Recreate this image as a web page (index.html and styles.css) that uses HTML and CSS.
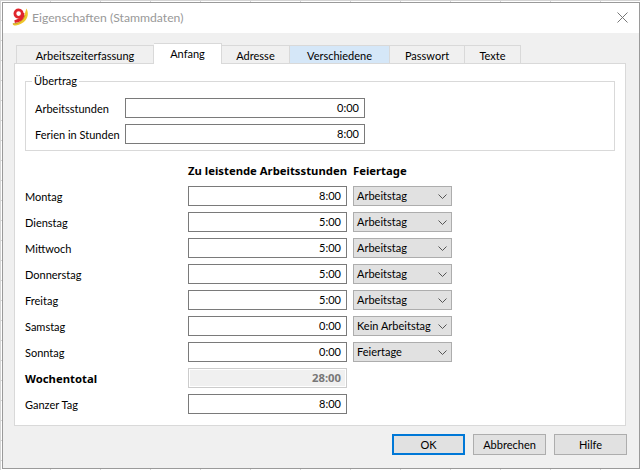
FILE: index.html
```html
<!DOCTYPE html>
<html lang="de">
<head>
<meta charset="utf-8">
<title>Eigenschaften (Stammdaten)</title>
<link rel="stylesheet" href="styles.css">
</head>
<body>
<div class="window">
  <header class="titlebar">
    <svg class="logo" width="17" height="18" viewBox="0 0 17 18">
      <path d="M14.5 0.5 C17.5 6 16 15 4 17.5 C2 17.8 0.8 17 0.5 15.5 C6 15.5 11 13 12.5 7 C13 5 13.5 3 14.5 0.5 Z" fill="#efc62c"/>
      <path d="M1 15.8 C6 16 11.5 13 13 7" fill="none" stroke="#b89a20" stroke-width="0.8"/>
      <circle cx="6.6" cy="5.6" r="3.7" fill="#fff" stroke="#e0252b" stroke-width="2.8"/>
      <path d="M11 5 C11.4 9.5 8 12.6 2.6 13.6" fill="none" stroke="#e0252b" stroke-width="2.8"/>
    </svg>
    <span class="title">Eigenschaften (Stammdaten)</span>
    <svg class="close" width="11" height="11" viewBox="0 0 11 11"><path d="M0.5 0.5 L10.5 10.5 M10.5 0.5 L0.5 10.5" stroke="#777" stroke-width="1" fill="none"/></svg>
  </header>
  <main class="content">
    <nav class="tabs">
      <span class="tab t1">Arbeitszeiterfassung</span>
      <span class="tab t2 active">Anfang</span>
      <span class="tab t3">Adresse</span>
      <span class="tab t4 tinted">Verschiedene</span>
      <span class="tab t5">Passwort</span>
      <span class="tab t6">Texte</span>
    </nav>
    <section class="panel">
      <fieldset class="group">
        <legend>Übertrag</legend>
        <div class="group-row"><label class="group-label">Arbeitsstunden</label><div class="field wide">0:00</div></div>
        <div class="group-row"><label class="group-label">Ferien in Stunden</label><div class="field wide">8:00</div></div>
      </fieldset>
      <div class="hours">
        <span></span><b class="head">Zu leistende Arbeitsstunden</b><b class="head">Feiertage</b>
        <label>Montag</label><div class="field">8:00</div><div class="select">Arbeitstag<svg class="chev" width="9" height="5" viewBox="0 0 9 5"><path d="M0.5 0.5 L4.5 4.5 L8.5 0.5" fill="none" stroke="#555"/></svg></div>
        <label>Dienstag</label><div class="field">5:00</div><div class="select">Arbeitstag<svg class="chev" width="9" height="5" viewBox="0 0 9 5"><path d="M0.5 0.5 L4.5 4.5 L8.5 0.5" fill="none" stroke="#555"/></svg></div>
        <label>Mittwoch</label><div class="field">5:00</div><div class="select">Arbeitstag<svg class="chev" width="9" height="5" viewBox="0 0 9 5"><path d="M0.5 0.5 L4.5 4.5 L8.5 0.5" fill="none" stroke="#555"/></svg></div>
        <label>Donnerstag</label><div class="field">5:00</div><div class="select">Arbeitstag<svg class="chev" width="9" height="5" viewBox="0 0 9 5"><path d="M0.5 0.5 L4.5 4.5 L8.5 0.5" fill="none" stroke="#555"/></svg></div>
        <label>Freitag</label><div class="field">5:00</div><div class="select">Arbeitstag<svg class="chev" width="9" height="5" viewBox="0 0 9 5"><path d="M0.5 0.5 L4.5 4.5 L8.5 0.5" fill="none" stroke="#555"/></svg></div>
        <label>Samstag</label><div class="field">0:00</div><div class="select">Kein Arbeitstag<svg class="chev" width="9" height="5" viewBox="0 0 9 5"><path d="M0.5 0.5 L4.5 4.5 L8.5 0.5" fill="none" stroke="#555"/></svg></div>
        <label>Sonntag</label><div class="field">0:00</div><div class="select">Feiertage<svg class="chev" width="9" height="5" viewBox="0 0 9 5"><path d="M0.5 0.5 L4.5 4.5 L8.5 0.5" fill="none" stroke="#555"/></svg></div>
        <label class="strong">Wochentotal</label><div class="field total">28:00</div><span></span>
        <label>Ganzer Tag</label><div class="field">8:00</div><span></span>
      </div>
    </section>
    <footer class="actions">
      <button class="btn default">OK</button>
      <button class="btn">Abbrechen</button>
      <button class="btn">Hilfe</button>
    </footer>
  </main>
</div>
</body>
</html>
```
FILE: styles.css
```css
* { box-sizing: border-box; }
html, body { margin: 0; height: 470px; overflow: hidden; }
body {
  padding: 2px 0 0 2px;
  background-color: #fff;
  background-image: linear-gradient(#d4d4d4 1px, transparent 1px), linear-gradient(90deg, #d4d4d4 1px, transparent 1px);
  background-size: 50px 20px;
  font: 11px Lato, "Open Sans", sans-serif;
  color: #000;
}
.window {
  width: 638px;
  height: 467px;
  border: 1px solid #9a9a9a;
  background: #f0f0f0;
  display: flex;
  flex-direction: column;
}
.titlebar {
  height: 30px;
  background: #fff;
  display: flex;
  align-items: center;
  padding: 0 11px 2px 9px;
}
.logo { margin-right: 3px; }
.title { flex: 1; color: #999; font-size: 12.2px; }
.content { flex: 1; padding: 11px 0 0 11px; }
.tabs { display: flex; height: 20px; padding-left: 2px; align-items: flex-end; position: relative; z-index: 1; }
.tab {
  height: 18px;
  margin-bottom: 1px;
  background: #f0f0f0;
  border: 1px solid #d9d9d9;
  border-bottom: 0;
  border-left: 0;
  display: flex;
  align-items: center;
  justify-content: center;
  padding-top: 1px;
}
.t1 { width: 138px; border-left: 1px solid #d9d9d9; }
.t2 { width: 68px; }
.t3 { width: 68px; }
.t4 { width: 100px; }
.t5 { width: 75px; }
.t6 { width: 56px; }
.tab.active { height: 21px; margin-bottom: 0; background: #fff; padding: 0 0 2px; }
.tab.tinted { background: #d5e7f8; }
.panel {
  width: 612px;
  height: 363px;
  margin-top: -1px;
  background: #fff;
  border: 1px solid #d9d9d9;
  padding: 10px 10px 0 10px;
}
.group {
  margin: 0;
  padding: 10px 0 0 9px;
  height: 77px;
  border: 1px solid #d9d9d9;
  display: flex;
  flex-direction: column;
  gap: 6px;
}
.group legend { padding: 0 2px; margin-left: -3px; line-height: 14px; }
.group-row { display: flex; align-items: center; height: 20px; }
.group-label { width: 90px; white-space: nowrap; }
.field {
  height: 20px;
  width: 100%;
  border: 1px solid #7a7a7a;
  background: #fff;
  text-align: right;
  padding-right: 5px;
  line-height: 18px;
}
.field.wide { width: 240px; }
.field.total {
  background: #f0f0f0;
  border: 1px solid #ccc;
  outline: 1px solid #fff;
  outline-offset: -2px;
  color: #777;
  font: 700 11.3px "Noto Sans", sans-serif;
  line-height: 18px;
}
.hours {
  display: grid;
  grid-template-columns: 157px 159px 99px;
  column-gap: 6px;
  grid-auto-rows: 20px;
  row-gap: 6px;
  margin-top: 9px;
  align-items: center;
}
.head { white-space: nowrap; font: 700 11.3px "Noto Sans", sans-serif; }
.strong { font: 700 11.3px "Noto Sans", sans-serif; }
.select {
  height: 20px;
  background: #e1e1e1;
  border: 1px solid #adadad;
  padding-left: 3px;
  padding-right: 4px;
  line-height: 18px;
  display: flex;
  justify-content: space-between;
  align-items: center;
  white-space: nowrap;
}
.actions { display: flex; gap: 8px; padding: 8px 0 0 378px; }
.btn {
  width: 73px;
  height: 21px;
  font: inherit;
  color: #000;
  background: #e1e1e1;
  border: 1px solid #adadad;
  padding: 0;
}
.btn.default { border: 2px solid #0078d7; }
```
